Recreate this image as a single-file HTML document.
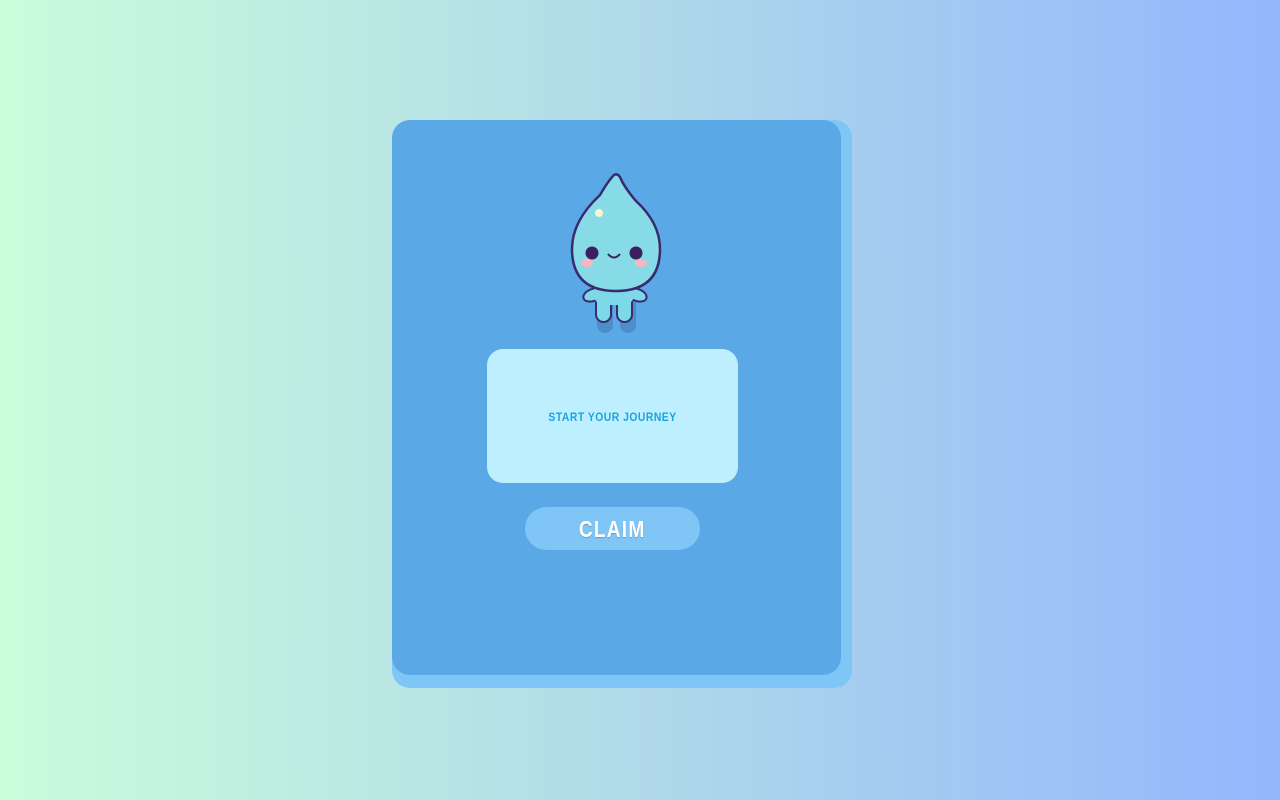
<!DOCTYPE html>
<html><head><style>
html,body{margin:0;width:1280px;height:800px;overflow:hidden;background:linear-gradient(90deg,#c9fddb 0%,#b0d9e9 50%,#93b6fd 100%);font-family:"Liberation Sans",sans-serif}
.back{position:absolute;left:392px;top:120px;width:460px;height:568px;border-radius:18px;background:#7fc5f6}
.card{position:absolute;left:392px;top:120px;width:449px;height:555px;border-radius:18px;background:#5ba8e6}
.box{position:absolute;left:487px;top:349px;width:251px;height:134px;border-radius:16px;background:#bdeffe;text-align:center;line-height:136px;font-size:12px;font-weight:bold;color:#1aa4e3;letter-spacing:.6px}
.btn{position:absolute;left:525px;top:507px;width:175px;height:43px;border-radius:22px;background:#7fc5f6;text-align:center;line-height:45px;font-size:23px;font-weight:bold;color:#fff;letter-spacing:1.5px;text-shadow:0 1px 1px rgba(0,0,0,.2)}
.box span{display:inline-block;transform:scaleX(.86)}
.btn span{display:inline-block;transform:scaleX(.83)}
svg{position:absolute;left:550px;top:165px}
</style></head><body>
<div class="back"></div><div class="card"></div>
<svg width="130" height="175" viewBox="0 0 130 175">
<g fill="#3a6fa8" opacity=".45"><rect x="47" y="130" width="16" height="38" rx="8"/><rect x="70" y="130" width="16" height="38" rx="8"/></g>
<g fill="#7dd8e8" stroke="#3b2a6e" stroke-width="2">
<ellipse cx="43" cy="130" rx="10" ry="6" transform="rotate(-20 43 130)"/>
<ellipse cx="87" cy="130" rx="10" ry="6" transform="rotate(20 87 130)"/>
<rect x="46" y="118" width="15" height="39" rx="7.5"/>
<rect x="67" y="118" width="15" height="39" rx="7.5"/>
<rect x="44" y="116" width="40" height="24" rx="10" stroke="none"/>
</g>
<path d="M64 10 Q58 16 50 30 Q22 56 22 84 Q22 126 66 126 Q110 126 110 84 Q110 58 86 36 Q74 22 70 12 Q67 8 64 10 Z" fill="#86dbe6" stroke="#3b2a6e" stroke-width="2.5"/>
<circle cx="49" cy="48" r="4" fill="#f8f6d0"/>
<circle cx="42" cy="88" r="6.5" fill="#3b1f5e"/><circle cx="86" cy="88" r="6.5" fill="#3b1f5e"/>
<ellipse cx="37" cy="98" rx="6" ry="4" fill="#f8b7c0"/><ellipse cx="91" cy="98" rx="6" ry="4" fill="#f8b7c0"/>
<path d="M58 89 Q64 96 70 89" fill="none" stroke="#3b1f5e" stroke-width="2"/>
</svg>
<div class="box"><span>START YOUR JOURNEY</span></div>
<div class="btn"><span>CLAIM</span></div>
</body></html>
